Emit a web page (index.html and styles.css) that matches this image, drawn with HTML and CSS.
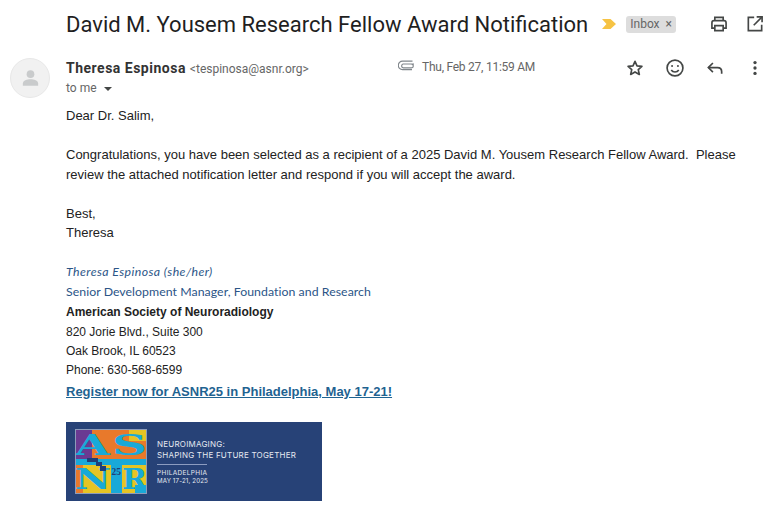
FILE: index.html
```html
<!DOCTYPE html>
<html lang="en">
<head>
    <meta charset="UTF-8">
    <meta name="viewport" content="width=device-width, initial-scale=1.0">
    <title>David M. Yousem Research Fellow Award Notification</title>
    <link rel="stylesheet" href="styles.css">
</head>
<body>
    <div class="subject-row">
        <h1 class="subject">David M. Yousem Research Fellow Award Notification</h1>
        <svg class="marker" width="14" height="10" viewBox="0 0 14 10"><path d="M0 0h8.500L14 5l-5.500 5H0l4.500-5z" fill="#f6c344"/></svg>
        <span class="label">Inbox <span class="label-x">×</span></span>
        <div class="subject-actions">
            <svg class="icon" width="20" height="20" viewBox="0 0 24 24" fill="none" stroke="#444746" stroke-width="2"><path d="M7 8V4h10v4"/><path d="M7 17H3.500v-6.500A2.500 2.500 0 0 1 6 8h12a2.500 2.500 0 0 1 2.500 2.500V17H17"/><path d="M7 14h10v6H7z"/></svg>
            <svg class="icon" width="20" height="20" viewBox="0 0 24 24" fill="none" stroke="#444746" stroke-width="2"><path d="M11 4H4v16h16v-7"/><path d="M14 3.500h6.500V10"/><path d="M20.500 3.500 10.500 13.500"/></svg>
        </div>
    </div>

    <div class="message-head">
        <div class="avatar">
            <svg width="17" height="18" viewBox="0 0 20 20" fill="#c9cbcc"><circle cx="10" cy="5.500" r="4.500"/><path d="M1 19v-2.500C1 13 6 11.500 10 11.500s9 1.500 9 5V19z"/></svg>
        </div>
        <div class="sender">
            <div><span class="sender-name">Theresa Espinosa</span> <span class="sender-mail">&lt;tespinosa@asnr.org&gt;</span></div>
            <div class="to-me">to me <span class="caret"></span></div>
        </div>
        <svg class="clip" width="17" height="11" viewBox="0 0 17 11" fill="none" stroke="#80868b" stroke-width="1.200"><path d="M16 4H5a2 2 0 0 0 0 3.800h8.500a1.800 1.800 0 0 0 0-3.600"/><path d="M14.500 1.200H4.500a3.900 3.900 0 0 0 0 8.400H14"/></svg>
        <div class="date">Thu, Feb 27, 11:59 AM</div>
        <div class="message-actions">
            <svg class="icon" width="20" height="20" viewBox="0 0 24 24" fill="none" stroke="#444746" stroke-width="2" stroke-linejoin="round"><path d="m12 4 2.400 5.400 5.900.6-4.400 3.900 1.300 5.800-5.200-3-5.200 3 1.300-5.800L3.700 10l5.900-.6z"/></svg>
            <svg class="icon" width="20" height="20" viewBox="0 0 24 24" fill="none" stroke="#444746" stroke-width="2"><circle cx="12" cy="12" r="9.500"/><circle cx="8.500" cy="9.500" r="1.200" fill="#444746" stroke="none"/><circle cx="15.500" cy="9.500" r="1.200" fill="#444746" stroke="none"/><path d="M7.500 14.500c2 3 7 3 9 0"/></svg>
            <svg class="icon" width="20" height="20" viewBox="0 0 24 24" fill="none" stroke="#444746" stroke-width="2"><path d="M9.500 6 4 11.500 9.500 17"/><path d="M4 11.500h11c3 0 5 2 5 5V19"/></svg>
            <svg class="icon" width="20" height="20" viewBox="0 0 24 24" fill="#444746"><circle cx="12" cy="5.500" r="2"/><circle cx="12" cy="12" r="2"/><circle cx="12" cy="18.500" r="2"/></svg>
        </div>
    </div>

    <div class="message-body">
        <p>Dear Dr. Salim,</p>
        <p>Congratulations, you have been selected as a recipient of a 2025 David M. Yousem Research Fellow Award.&nbsp; Please review the attached notification letter and respond if you will accept the award.</p>
        <p>Best,<br>Theresa</p>

        <div class="signature">
            <div class="sig-line sig-name">Theresa Espinosa (she/her)</div>
            <div class="sig-line sig-title">Senior Development Manager, Foundation and Research</div>
            <div class="sig-line sig-org">American Society of Neuroradiology</div>
            <div class="sig-line">820 Jorie Blvd., Suite 300</div>
            <div class="sig-line">Oak Brook, IL 60523</div>
            <div class="sig-line">Phone: 630-568-6599</div>
            <a class="sig-link" href="#">Register now for ASNR25 in Philadelphia, May 17-21!</a>
        </div>

        <div class="banner">
            <svg class="banner-logo" width="72" height="65" viewBox="0 0 72 65">
                <rect width="72" height="65" fill="#19a9d8"/>
                <!-- colour blocks behind the letters -->
                <path d="M0 0h17v30H0z" fill="#6a3a92"/>
                <path d="M17 0h55v30H17z" fill="#e8792b"/>
                <path d="M54 0h18v12H54z" fill="#e6c424"/>
                <path d="M0 36h8v29H0z" fill="#e8792b"/>
                <path d="M8 36h28v29H8z" fill="#e6c424"/>
                <path d="M47 36h25v29H47z" fill="#e6c424"/>
                <path d="M60 56h12v9H60z" fill="#19a9d8"/>
                <text class="logo-letter" x="0" y="26" textLength="35" lengthAdjust="spacingAndGlyphs">A</text>
                <text class="logo-letter" x="37" y="26" textLength="35" lengthAdjust="spacingAndGlyphs">S</text>
                <text class="logo-letter" x="0" y="60" textLength="36" lengthAdjust="spacingAndGlyphs">N</text>
                <text class="logo-letter" x="47" y="60" textLength="25" lengthAdjust="spacingAndGlyphs">R</text>
                <path d="M12 29h11v4h4v4h4v5h-6v-5h-4v-4h-9z" fill="#1f3f78"/>
                <text class="logo-num" x="36.500" y="46">25</text>
                <rect x=".5" y=".5" width="71" height="64" fill="none" stroke="#8d9cba"/>
            </svg>
            <div class="banner-text">
                <div class="banner-title">NEUROIMAGING:<br>SHAPING THE FUTURE TOGETHER</div>
                <div class="banner-rule"></div>
                <div class="banner-city">PHILADELPHIA</div>
                <div class="banner-dates">MAY 17-21, 2025</div>
            </div>
        </div>
    </div>
</body>
</html>
```

FILE: styles.css
```css
/* Base styles */
* {
    margin: 0;
    padding: 0;
    box-sizing: border-box;
}

body {
    font-family: 'Liberation Sans', Arial, sans-serif;
    background: #fff;
    color: #222;
    width: 773px;
    height: 522px;
    overflow: hidden;
}

.icon {
    display: block;
}

/* Subject row */
.subject-row {
    display: flex;
    align-items: center;
    height: 48px;
    padding-left: 66px;
}

.subject {
    font-family: 'Roboto', sans-serif;
    font-weight: 400;
    font-size: 22px;
    color: #1f1f1f;
    white-space: nowrap;
}

.marker {
    margin-left: 14px;
    flex: none;
}

.label {
    margin-left: 10px;
    padding: 0 4px;
    height: 17px;
    line-height: 17px;
    background: #dddddd;
    border-radius: 3px;
    font-family: 'Roboto', sans-serif;
    font-size: 12px;
    color: #666;
    white-space: nowrap;
}

.label-x {
    margin-left: 3px;
}

.subject-actions {
    display: flex;
    gap: 16px;
    margin-left: auto;
    margin-right: 8px;
}

/* Message header */
.message-head {
    display: flex;
    align-items: flex-start;
    height: 50px;
    margin-top: 10px;
    padding-left: 10px;
}

.avatar {
    display: flex;
    align-items: center;
    justify-content: center;
    flex: none;
    width: 40px;
    height: 40px;
    border-radius: 50%;
    background: #f1f1f1;
    border: 1px solid #e8e8e8;
}

.sender {
    width: 332px;
    margin-left: 16px;
    font-family: 'Roboto', sans-serif;
}

.sender-name {
    font-size: 14px;
    font-weight: 700;
    letter-spacing: .5px;
    color: #333;
}

.sender-mail {
    font-size: 12px;
    color: #666;
}

.to-me {
    margin-top: 4px;
    font-size: 12px;
    color: #666;
}

.caret {
    display: inline-block;
    margin-left: 4px;
    vertical-align: middle;
    border-left: 4px solid transparent;
    border-right: 4px solid transparent;
    border-top: 4px solid #444746;
}

.clip {
    margin-top: 2px;
    flex: none;
}

.date {
    margin-left: 7px;
    margin-top: 2px;
    font-family: 'Roboto', sans-serif;
    font-size: 12px;
    letter-spacing: -.25px;
    color: #666;
    white-space: nowrap;
}

.message-actions {
    display: flex;
    gap: 20px;
    margin-left: auto;
    margin-right: 8px;
}

/* Message body */
.message-body {
    margin-top: -2px;
    padding: 0 30px 0 66px;
    font-size: 13px;
    line-height: 19.500px;
    color: #222;
}

.message-body p {
    margin-bottom: 19.500px;
}

.signature {
    margin-top: 8px;
    font-size: 12px;
}

.sig-line {
    line-height: 19.300px;
}

.sig-name,
.sig-title {
    font-family: 'Lato', sans-serif;
    font-size: 12.300px;
    line-height: 19.700px;
    letter-spacing: .05px;
    color: #2b5587;
}

.sig-name {
    font-style: italic;
    letter-spacing: .42px;
}

.sig-title {
    margin-bottom: 2px;
}

.sig-org {
    font-weight: 700;
}

.sig-link {
    display: block;
    margin-top: 1px;
    font-size: 13px;
    font-weight: 700;
    color: #1f6391;
}

/* Conference banner */
.banner {
    display: flex;
    align-items: center;
    width: 256px;
    height: 79px;
    margin-top: 21px;
    padding-left: 9px;
    background: #274277;
}

.banner-logo {
    flex: none;
}

.logo-letter {
    font-family: 'DejaVu Serif', serif;
    font-weight: 700;
    font-size: 27px;
    fill: #19a9d8;
}

.logo-num {
    font-family: 'Liberation Serif', serif;
    font-weight: 700;
    font-size: 9.500px;
    fill: #1f3f78;
}

.banner-text {
    margin-left: 10px;
    font-family: 'Inter', sans-serif;
    color: #e4e8f0;
}

.banner-title {
    font-size: 8px;
    line-height: 11px;
    letter-spacing: .22px;
}

.banner-rule {
    width: 50px;
    height: 1px;
    margin: 3px 0 4px;
    background: #8c9cc0;
}

.banner-city {
    font-size: 6.500px;
    line-height: 8px;
    letter-spacing: .33px;
}

.banner-dates {
    font-size: 6.200px;
    line-height: 8px;
    letter-spacing: .13px;
}
```
